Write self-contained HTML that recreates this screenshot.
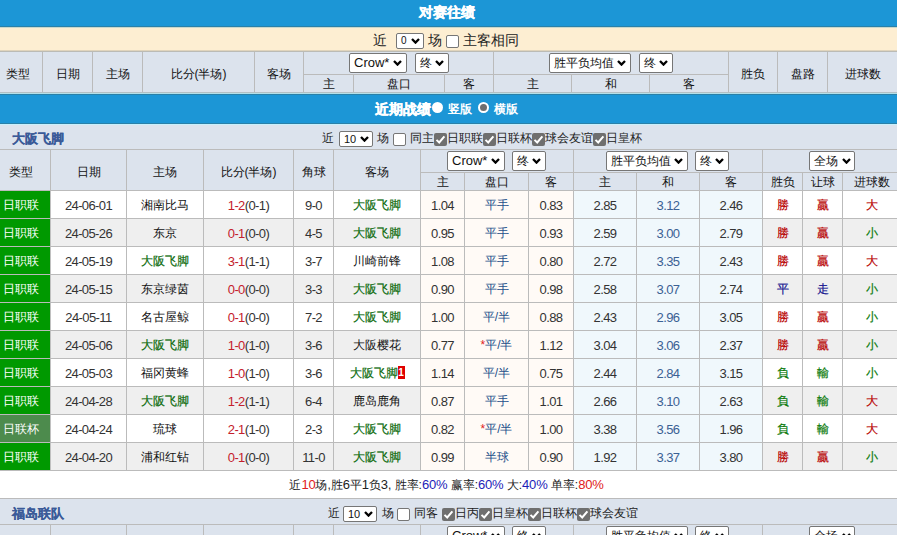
<!DOCTYPE html>
<html><head><meta charset="utf-8"><style>
html,body{margin:0;padding:0;}
body{width:897px;height:535px;overflow:hidden;position:relative;background:#fff;font-family:"Liberation Sans",sans-serif;font-size:12px;color:#222;}
body>div{position:absolute;white-space:nowrap;}
.h{font-size:12px;color:#111;}
.t{font-size:12px;}
.k{font-size:12px;-webkit-text-stroke:0.2px currentColor;}
.k .rc{-webkit-text-stroke:0;}
.n{font-size:13px;letter-spacing:-0.6px;}
.s{font-size:12px;}
.s i{font-style:normal;font-size:13px;letter-spacing:-0.2px;}
.b{color:#1c1cb8;}
.r{color:#e02020;}
.sel{background:#fff;border:1px solid #767676;border-radius:2px;color:#111;}
.cbu{background:#fff;border:1px solid #767676;border-radius:2px;}
.cbc{background:#6f6f6f;border-radius:2px;}
.rc{display:inline-block;width:7px;height:13px;background:#e00000;color:#fff;font-weight:bold;font-size:10px;letter-spacing:0;line-height:13px;text-align:center;vertical-align:middle;margin-top:-3px;}
</style></head><body>
<div style="left:0px;top:0px;width:897px;height:26px;background:#1c96d6;"></div>
<div style="left:0px;top:26px;width:897px;height:1px;background:#2a80a8;"></div>
<div style="left:346.5px;top:-1px;width:200px;height:26px;line-height:26px;text-align:center;color:#fff;font-weight:bold;font-size:14px;-webkit-text-stroke:0.4px #fff;">对赛往绩</div>
<div style="left:0px;top:27px;width:897px;height:24px;background:#fdeed2;"></div>
<div style="left:0px;top:27px;width:897px;height:1px;background:#c8d8cc;"></div>
<div style="left:373px;top:28px;height:24px;line-height:24px;font-size:14px;color:#222;">近</div>
<div class="sel" style="left:396px;top:33px;width:26px;height:14px;"><span style="position:absolute;left:4px;top:0px;line-height:14px;font-size:10px">0</span><svg width="9" height="6" viewBox="0 0 9 6" style="position:absolute;right:3px;top:4px"><path d="M1 1 L4.5 4.6 L8 1" fill="none" stroke="#000" stroke-width="2.3"/></svg></div>
<div style="left:428px;top:28px;height:24px;line-height:24px;font-size:14px;color:#222;">场</div>
<div class="cbu" style="left:446px;top:35px;width:11px;height:11px;"></div>
<div style="left:463px;top:28px;height:24px;line-height:24px;font-size:14px;color:#222;">主客相同</div>
<div style="left:0px;top:50px;width:897px;height:1px;background:#e0d4bc;"></div>
<div style="left:0px;top:51px;width:897px;height:1px;background:#bbbbb5;"></div>
<div style="left:0px;top:52px;width:897px;height:40px;background:#dce3ed;"></div>
<div style="left:0px;top:92px;width:897px;height:1px;background:#b4c0c4;"></div>
<div style="left:0px;top:93px;width:897px;height:1px;background:#b3e0ea;"></div>
<div style="left:42px;top:52px;width:1px;height:40px;background:#bbbbbb;"></div>
<div style="left:92px;top:52px;width:1px;height:40px;background:#bbbbbb;"></div>
<div style="left:142px;top:52px;width:1px;height:40px;background:#bbbbbb;"></div>
<div style="left:254px;top:52px;width:1px;height:40px;background:#bbbbbb;"></div>
<div style="left:303px;top:52px;width:1px;height:40px;background:#bbbbbb;"></div>
<div style="left:493px;top:52px;width:1px;height:40px;background:#bbbbbb;"></div>
<div style="left:728px;top:52px;width:1px;height:40px;background:#bbbbbb;"></div>
<div style="left:777px;top:52px;width:1px;height:40px;background:#bbbbbb;"></div>
<div style="left:827px;top:52px;width:1px;height:40px;background:#bbbbbb;"></div>
<div style="left:303px;top:74px;width:425px;height:1px;background:#bbbbbb;"></div>
<div style="left:353px;top:75px;width:1px;height:17px;background:#bbbbbb;"></div>
<div style="left:444px;top:75px;width:1px;height:17px;background:#bbbbbb;"></div>
<div style="left:571px;top:75px;width:1px;height:17px;background:#bbbbbb;"></div>
<div style="left:649px;top:75px;width:1px;height:17px;background:#bbbbbb;"></div>
<div class="h" style="left:-7px;top:54px;width:49px;height:40px;line-height:40px;text-align:center;">类型</div>
<div class="h" style="left:43px;top:54px;width:49px;height:40px;line-height:40px;text-align:center;">日期</div>
<div class="h" style="left:93px;top:54px;width:49px;height:40px;line-height:40px;text-align:center;">主场</div>
<div class="h" style="left:143px;top:54px;width:111px;height:40px;line-height:40px;text-align:center;">比分(半场)</div>
<div class="h" style="left:255px;top:54px;width:48px;height:40px;line-height:40px;text-align:center;">客场</div>
<div class="h" style="left:729px;top:54px;width:48px;height:40px;line-height:40px;text-align:center;">胜负</div>
<div class="h" style="left:778px;top:54px;width:49px;height:40px;line-height:40px;text-align:center;">盘路</div>
<div class="h" style="left:828px;top:54px;width:69px;height:40px;line-height:40px;text-align:center;">进球数</div>
<div class="h" style="left:304px;top:76px;width:49px;height:17px;line-height:17px;text-align:center;">主</div>
<div class="h" style="left:354px;top:76px;width:90px;height:17px;line-height:17px;text-align:center;">盘口</div>
<div class="h" style="left:445px;top:76px;width:48px;height:17px;line-height:17px;text-align:center;">客</div>
<div class="h" style="left:494px;top:76px;width:77px;height:17px;line-height:17px;text-align:center;">主</div>
<div class="h" style="left:572px;top:76px;width:77px;height:17px;line-height:17px;text-align:center;">和</div>
<div class="h" style="left:650px;top:76px;width:78px;height:17px;line-height:17px;text-align:center;">客</div>
<div class="sel" style="left:349px;top:53px;width:56px;height:18px;"><span style="position:absolute;left:4px;top:0px;line-height:18px;font-size:13px">Crow*</span><svg width="9" height="6" viewBox="0 0 9 6" style="position:absolute;right:4px;top:6px"><path d="M1 1 L4.5 4.6 L8 1" fill="none" stroke="#000" stroke-width="2.3"/></svg></div>
<div class="sel" style="left:415px;top:53px;width:32px;height:18px;"><span style="position:absolute;left:4px;top:0px;line-height:18px;font-size:12px">终</span><svg width="9" height="6" viewBox="0 0 9 6" style="position:absolute;right:4px;top:6px"><path d="M1 1 L4.5 4.6 L8 1" fill="none" stroke="#000" stroke-width="2.3"/></svg></div>
<div class="sel" style="left:549px;top:53px;width:80px;height:18px;"><span style="position:absolute;left:4px;top:0px;line-height:18px;font-size:12px">胜平负均值</span><svg width="9" height="6" viewBox="0 0 9 6" style="position:absolute;right:4px;top:6px"><path d="M1 1 L4.5 4.6 L8 1" fill="none" stroke="#000" stroke-width="2.3"/></svg></div>
<div class="sel" style="left:639px;top:53px;width:32px;height:18px;"><span style="position:absolute;left:4px;top:0px;line-height:18px;font-size:12px">终</span><svg width="9" height="6" viewBox="0 0 9 6" style="position:absolute;right:4px;top:6px"><path d="M1 1 L4.5 4.6 L8 1" fill="none" stroke="#000" stroke-width="2.3"/></svg></div>
<div style="left:0px;top:94px;width:897px;height:1px;background:#2a80a8;"></div>
<div style="left:0px;top:95px;width:897px;height:28px;background:#1c96d6;"></div>
<div style="left:0px;top:123px;width:897px;height:1px;background:#2a80a8;"></div>
<div style="left:375px;top:95px;height:28px;line-height:28px;font-size:14px;font-weight:bold;color:#fff;-webkit-text-stroke:0.4px #fff;">近期战绩</div>
<div style="left:432px;top:102px;width:11px;height:11px;border-radius:50%;background:#fff;"></div>
<div style="left:448px;top:95px;height:28px;line-height:28px;font-size:12px;font-weight:bold;color:#fff;">竖版</div>
<div style="left:478px;top:102px;width:7px;height:7px;border-radius:50%;background:#6e6e6e;border:2px solid #fff;"></div>
<div style="left:494px;top:95px;height:28px;line-height:28px;font-size:12px;font-weight:bold;color:#fff;">横版</div>
<div style="left:0px;top:124px;width:897px;height:25px;background:#dce3ed;"></div>
<div style="left:0px;top:124px;width:897px;height:1px;background:#c8f0fc;"></div>
<div style="left:12px;top:126px;height:25px;line-height:25px;font-size:13px;font-weight:bold;color:#3a5a98;-webkit-text-stroke:0.15px #3a5a98;">大阪飞脚</div>
<div style="left:322px;top:126px;height:25px;line-height:25px;font-size:12px;color:#222;">近</div>
<div class="sel" style="left:339px;top:131px;width:32px;height:14px;"><span style="position:absolute;left:4px;top:0px;line-height:14px;font-size:11px">10</span><svg width="9" height="6" viewBox="0 0 9 6" style="position:absolute;right:3px;top:4px"><path d="M1 1 L4.5 4.6 L8 1" fill="none" stroke="#000" stroke-width="2.3"/></svg></div>
<div style="left:377px;top:126px;height:25px;line-height:25px;font-size:12px;color:#222;">场</div>
<div class="cbu" style="left:393px;top:133px;width:11px;height:11px;"></div>
<div style="left:410px;top:126px;height:25px;line-height:25px;font-size:12px;color:#222;">同主</div>
<div class="cbc" style="left:434px;top:133px;width:13px;height:13px;"><svg width="13" height="13" viewBox="0 0 13 13" style="position:absolute;left:0;top:0"><path d="M2.5 6.9 L5.2 9.5 L10.4 3.3" fill="none" stroke="#fff" stroke-width="2"/></svg></div>
<div style="left:447px;top:126px;height:25px;line-height:25px;font-size:12px;color:#222;">日职联</div>
<div class="cbc" style="left:483px;top:133px;width:13px;height:13px;"><svg width="13" height="13" viewBox="0 0 13 13" style="position:absolute;left:0;top:0"><path d="M2.5 6.9 L5.2 9.5 L10.4 3.3" fill="none" stroke="#fff" stroke-width="2"/></svg></div>
<div style="left:496px;top:126px;height:25px;line-height:25px;font-size:12px;color:#222;">日联杯</div>
<div class="cbc" style="left:532px;top:133px;width:13px;height:13px;"><svg width="13" height="13" viewBox="0 0 13 13" style="position:absolute;left:0;top:0"><path d="M2.5 6.9 L5.2 9.5 L10.4 3.3" fill="none" stroke="#fff" stroke-width="2"/></svg></div>
<div style="left:545px;top:126px;height:25px;line-height:25px;font-size:12px;color:#222;">球会友谊</div>
<div class="cbc" style="left:593px;top:133px;width:13px;height:13px;"><svg width="13" height="13" viewBox="0 0 13 13" style="position:absolute;left:0;top:0"><path d="M2.5 6.9 L5.2 9.5 L10.4 3.3" fill="none" stroke="#fff" stroke-width="2"/></svg></div>
<div style="left:606px;top:126px;height:25px;line-height:25px;font-size:12px;color:#222;">日皇杯</div>
<div style="left:0px;top:149px;width:897px;height:1px;background:#bbbbbb;"></div>
<div style="left:0px;top:150px;width:897px;height:40px;background:#dce3ed;"></div>
<div style="left:0px;top:190px;width:897px;height:1px;background:#bbbbbb;"></div>
<div style="left:50px;top:150px;width:1px;height:40px;background:#bbbbbb;"></div>
<div style="left:126px;top:150px;width:1px;height:40px;background:#bbbbbb;"></div>
<div style="left:203px;top:150px;width:1px;height:40px;background:#bbbbbb;"></div>
<div style="left:293px;top:150px;width:1px;height:40px;background:#bbbbbb;"></div>
<div style="left:333px;top:150px;width:1px;height:40px;background:#bbbbbb;"></div>
<div style="left:420px;top:150px;width:1px;height:40px;background:#bbbbbb;"></div>
<div style="left:573px;top:150px;width:1px;height:40px;background:#bbbbbb;"></div>
<div style="left:762px;top:150px;width:1px;height:40px;background:#bbbbbb;"></div>
<div style="left:420px;top:172px;width:477px;height:1px;background:#bbbbbb;"></div>
<div style="left:464px;top:173px;width:1px;height:17px;background:#bbbbbb;"></div>
<div style="left:528px;top:173px;width:1px;height:17px;background:#bbbbbb;"></div>
<div style="left:636px;top:173px;width:1px;height:17px;background:#bbbbbb;"></div>
<div style="left:699px;top:173px;width:1px;height:17px;background:#bbbbbb;"></div>
<div style="left:802px;top:173px;width:1px;height:17px;background:#bbbbbb;"></div>
<div style="left:842px;top:173px;width:1px;height:17px;background:#bbbbbb;"></div>
<div class="h" style="left:1px;top:152px;width:40px;height:40px;line-height:40px;text-align:center;">类型</div>
<div class="h" style="left:51px;top:152px;width:75px;height:40px;line-height:40px;text-align:center;">日期</div>
<div class="h" style="left:127px;top:152px;width:76px;height:40px;line-height:40px;text-align:center;">主场</div>
<div class="h" style="left:204px;top:152px;width:89px;height:40px;line-height:40px;text-align:center;">比分(半场)</div>
<div class="h" style="left:294px;top:152px;width:39px;height:40px;line-height:40px;text-align:center;">角球</div>
<div class="h" style="left:334px;top:152px;width:86px;height:40px;line-height:40px;text-align:center;">客场</div>
<div class="h" style="left:421px;top:174px;width:43px;height:17px;line-height:17px;text-align:center;">主</div>
<div class="h" style="left:465px;top:174px;width:63px;height:17px;line-height:17px;text-align:center;">盘口</div>
<div class="h" style="left:529px;top:174px;width:44px;height:17px;line-height:17px;text-align:center;">客</div>
<div class="h" style="left:574px;top:174px;width:62px;height:17px;line-height:17px;text-align:center;">主</div>
<div class="h" style="left:637px;top:174px;width:62px;height:17px;line-height:17px;text-align:center;">和</div>
<div class="h" style="left:700px;top:174px;width:62px;height:17px;line-height:17px;text-align:center;">客</div>
<div class="h" style="left:763px;top:174px;width:39px;height:17px;line-height:17px;text-align:center;">胜负</div>
<div class="h" style="left:803px;top:174px;width:39px;height:17px;line-height:17px;text-align:center;">让球</div>
<div class="h" style="left:843px;top:174px;width:57px;height:17px;line-height:17px;text-align:center;">进球数</div>
<div class="sel" style="left:447px;top:151px;width:56px;height:18px;"><span style="position:absolute;left:4px;top:0px;line-height:18px;font-size:13px">Crow*</span><svg width="9" height="6" viewBox="0 0 9 6" style="position:absolute;right:4px;top:6px"><path d="M1 1 L4.5 4.6 L8 1" fill="none" stroke="#000" stroke-width="2.3"/></svg></div>
<div class="sel" style="left:512px;top:151px;width:32px;height:18px;"><span style="position:absolute;left:4px;top:0px;line-height:18px;font-size:12px">终</span><svg width="9" height="6" viewBox="0 0 9 6" style="position:absolute;right:4px;top:6px"><path d="M1 1 L4.5 4.6 L8 1" fill="none" stroke="#000" stroke-width="2.3"/></svg></div>
<div class="sel" style="left:606px;top:151px;width:80px;height:18px;"><span style="position:absolute;left:4px;top:0px;line-height:18px;font-size:12px">胜平负均值</span><svg width="9" height="6" viewBox="0 0 9 6" style="position:absolute;right:4px;top:6px"><path d="M1 1 L4.5 4.6 L8 1" fill="none" stroke="#000" stroke-width="2.3"/></svg></div>
<div class="sel" style="left:695px;top:151px;width:32px;height:18px;"><span style="position:absolute;left:4px;top:0px;line-height:18px;font-size:12px">终</span><svg width="9" height="6" viewBox="0 0 9 6" style="position:absolute;right:4px;top:6px"><path d="M1 1 L4.5 4.6 L8 1" fill="none" stroke="#000" stroke-width="2.3"/></svg></div>
<div class="sel" style="left:809px;top:151px;width:44px;height:18px;"><span style="position:absolute;left:4px;top:0px;line-height:18px;font-size:12px">全场</span><svg width="9" height="6" viewBox="0 0 9 6" style="position:absolute;right:3px;top:6px"><path d="M1 1 L4.5 4.6 L8 1" fill="none" stroke="#000" stroke-width="2.3"/></svg></div>
<div style="left:50px;top:191px;width:847px;height:27px;background:#ffffff;"></div>
<div style="left:421px;top:191px;width:152px;height:27px;background:#fffaf6;"></div>
<div style="left:574px;top:191px;width:188px;height:27px;background:#f0f8fc;"></div>
<div style="left:0px;top:191px;width:50px;height:27px;background:#009900;"></div>
<div style="left:0px;top:218px;width:897px;height:1px;background:#bbbbbb;"></div>
<div style="left:126px;top:191px;width:1px;height:27px;background:#bbbbbb;"></div>
<div style="left:203px;top:191px;width:1px;height:27px;background:#bbbbbb;"></div>
<div style="left:293px;top:191px;width:1px;height:27px;background:#bbbbbb;"></div>
<div style="left:333px;top:191px;width:1px;height:27px;background:#bbbbbb;"></div>
<div style="left:420px;top:191px;width:1px;height:27px;background:#bbbbbb;"></div>
<div style="left:464px;top:191px;width:1px;height:27px;background:#bbbbbb;"></div>
<div style="left:528px;top:191px;width:1px;height:27px;background:#bbbbbb;"></div>
<div style="left:573px;top:191px;width:1px;height:27px;background:#bbbbbb;"></div>
<div style="left:636px;top:191px;width:1px;height:27px;background:#bbbbbb;"></div>
<div style="left:699px;top:191px;width:1px;height:27px;background:#bbbbbb;"></div>
<div style="left:762px;top:191px;width:1px;height:27px;background:#bbbbbb;"></div>
<div style="left:802px;top:191px;width:1px;height:27px;background:#bbbbbb;"></div>
<div style="left:842px;top:191px;width:1px;height:27px;background:#bbbbbb;"></div>
<div style="left:50px;top:191px;width:1px;height:27px;background:#c0c0c0;"></div>
<div class="t" style="left:0px;top:192px;width:41px;height:27px;line-height:27px;text-align:center;color:#fff;">日职联</div>
<div class="n" style="left:51px;top:192px;width:75px;height:27px;line-height:27px;text-align:center;color:#333;">24-06-01</div>
<div class="t" style="left:127px;top:192px;width:76px;height:27px;line-height:27px;text-align:center;color:#111;">湘南比马</div>
<div class="n" style="left:204px;top:192px;width:89px;height:27px;line-height:27px;text-align:center;color:#333;"><span style="color:#c4202c">1-2</span>(0-1)</div>
<div class="n" style="left:294px;top:192px;width:39px;height:27px;line-height:27px;text-align:center;color:#333;">9-0</div>
<div class="k" style="left:334px;top:192px;width:86px;height:27px;line-height:27px;text-align:center;color:#0a6a0a;">大阪飞脚</div>
<div class="n" style="left:421px;top:192px;width:43px;height:27px;line-height:27px;text-align:center;color:#333;">1.04</div>
<div class="t" style="left:465px;top:192px;width:63px;height:27px;line-height:27px;text-align:center;color:#24508a;">平手</div>
<div class="n" style="left:529px;top:192px;width:44px;height:27px;line-height:27px;text-align:center;color:#333;">0.83</div>
<div class="n" style="left:574px;top:192px;width:62px;height:27px;line-height:27px;text-align:center;color:#333;">2.85</div>
<div class="n" style="left:637px;top:192px;width:62px;height:27px;line-height:27px;text-align:center;color:#3b6194;">3.12</div>
<div class="n" style="left:700px;top:192px;width:62px;height:27px;line-height:27px;text-align:center;color:#333;">2.46</div>
<div class="k" style="left:763px;top:192px;width:39px;height:27px;line-height:27px;text-align:center;color:#b80000;">勝</div>
<div class="k" style="left:803px;top:192px;width:39px;height:27px;line-height:27px;text-align:center;color:#b80000;">贏</div>
<div class="k" style="left:843px;top:192px;width:57px;height:27px;line-height:27px;text-align:center;color:#b80000;">大</div>
<div style="left:50px;top:219px;width:847px;height:27px;background:#efefef;"></div>
<div style="left:421px;top:219px;width:152px;height:27px;background:#fffaf6;"></div>
<div style="left:574px;top:219px;width:188px;height:27px;background:#f0f8fc;"></div>
<div style="left:0px;top:219px;width:50px;height:27px;background:#009900;"></div>
<div style="left:0px;top:246px;width:897px;height:1px;background:#bbbbbb;"></div>
<div style="left:126px;top:219px;width:1px;height:27px;background:#bbbbbb;"></div>
<div style="left:203px;top:219px;width:1px;height:27px;background:#bbbbbb;"></div>
<div style="left:293px;top:219px;width:1px;height:27px;background:#bbbbbb;"></div>
<div style="left:333px;top:219px;width:1px;height:27px;background:#bbbbbb;"></div>
<div style="left:420px;top:219px;width:1px;height:27px;background:#bbbbbb;"></div>
<div style="left:464px;top:219px;width:1px;height:27px;background:#bbbbbb;"></div>
<div style="left:528px;top:219px;width:1px;height:27px;background:#bbbbbb;"></div>
<div style="left:573px;top:219px;width:1px;height:27px;background:#bbbbbb;"></div>
<div style="left:636px;top:219px;width:1px;height:27px;background:#bbbbbb;"></div>
<div style="left:699px;top:219px;width:1px;height:27px;background:#bbbbbb;"></div>
<div style="left:762px;top:219px;width:1px;height:27px;background:#bbbbbb;"></div>
<div style="left:802px;top:219px;width:1px;height:27px;background:#bbbbbb;"></div>
<div style="left:842px;top:219px;width:1px;height:27px;background:#bbbbbb;"></div>
<div style="left:50px;top:219px;width:1px;height:27px;background:#c0c0c0;"></div>
<div class="t" style="left:0px;top:220px;width:41px;height:27px;line-height:27px;text-align:center;color:#fff;">日职联</div>
<div class="n" style="left:51px;top:220px;width:75px;height:27px;line-height:27px;text-align:center;color:#333;">24-05-26</div>
<div class="t" style="left:127px;top:220px;width:76px;height:27px;line-height:27px;text-align:center;color:#111;">东京</div>
<div class="n" style="left:204px;top:220px;width:89px;height:27px;line-height:27px;text-align:center;color:#333;"><span style="color:#c4202c">0-1</span>(0-0)</div>
<div class="n" style="left:294px;top:220px;width:39px;height:27px;line-height:27px;text-align:center;color:#333;">4-5</div>
<div class="k" style="left:334px;top:220px;width:86px;height:27px;line-height:27px;text-align:center;color:#0a6a0a;">大阪飞脚</div>
<div class="n" style="left:421px;top:220px;width:43px;height:27px;line-height:27px;text-align:center;color:#333;">0.95</div>
<div class="t" style="left:465px;top:220px;width:63px;height:27px;line-height:27px;text-align:center;color:#24508a;">平手</div>
<div class="n" style="left:529px;top:220px;width:44px;height:27px;line-height:27px;text-align:center;color:#333;">0.93</div>
<div class="n" style="left:574px;top:220px;width:62px;height:27px;line-height:27px;text-align:center;color:#333;">2.59</div>
<div class="n" style="left:637px;top:220px;width:62px;height:27px;line-height:27px;text-align:center;color:#3b6194;">3.00</div>
<div class="n" style="left:700px;top:220px;width:62px;height:27px;line-height:27px;text-align:center;color:#333;">2.79</div>
<div class="k" style="left:763px;top:220px;width:39px;height:27px;line-height:27px;text-align:center;color:#b80000;">勝</div>
<div class="k" style="left:803px;top:220px;width:39px;height:27px;line-height:27px;text-align:center;color:#b80000;">贏</div>
<div class="k" style="left:843px;top:220px;width:57px;height:27px;line-height:27px;text-align:center;color:#0a7a0a;">小</div>
<div style="left:50px;top:247px;width:847px;height:27px;background:#ffffff;"></div>
<div style="left:421px;top:247px;width:152px;height:27px;background:#fffaf6;"></div>
<div style="left:574px;top:247px;width:188px;height:27px;background:#f0f8fc;"></div>
<div style="left:0px;top:247px;width:50px;height:27px;background:#009900;"></div>
<div style="left:0px;top:274px;width:897px;height:1px;background:#bbbbbb;"></div>
<div style="left:126px;top:247px;width:1px;height:27px;background:#bbbbbb;"></div>
<div style="left:203px;top:247px;width:1px;height:27px;background:#bbbbbb;"></div>
<div style="left:293px;top:247px;width:1px;height:27px;background:#bbbbbb;"></div>
<div style="left:333px;top:247px;width:1px;height:27px;background:#bbbbbb;"></div>
<div style="left:420px;top:247px;width:1px;height:27px;background:#bbbbbb;"></div>
<div style="left:464px;top:247px;width:1px;height:27px;background:#bbbbbb;"></div>
<div style="left:528px;top:247px;width:1px;height:27px;background:#bbbbbb;"></div>
<div style="left:573px;top:247px;width:1px;height:27px;background:#bbbbbb;"></div>
<div style="left:636px;top:247px;width:1px;height:27px;background:#bbbbbb;"></div>
<div style="left:699px;top:247px;width:1px;height:27px;background:#bbbbbb;"></div>
<div style="left:762px;top:247px;width:1px;height:27px;background:#bbbbbb;"></div>
<div style="left:802px;top:247px;width:1px;height:27px;background:#bbbbbb;"></div>
<div style="left:842px;top:247px;width:1px;height:27px;background:#bbbbbb;"></div>
<div style="left:50px;top:247px;width:1px;height:27px;background:#c0c0c0;"></div>
<div class="t" style="left:0px;top:248px;width:41px;height:27px;line-height:27px;text-align:center;color:#fff;">日职联</div>
<div class="n" style="left:51px;top:248px;width:75px;height:27px;line-height:27px;text-align:center;color:#333;">24-05-19</div>
<div class="k" style="left:127px;top:248px;width:76px;height:27px;line-height:27px;text-align:center;color:#0a6a0a;">大阪飞脚</div>
<div class="n" style="left:204px;top:248px;width:89px;height:27px;line-height:27px;text-align:center;color:#333;"><span style="color:#c4202c">3-1</span>(1-1)</div>
<div class="n" style="left:294px;top:248px;width:39px;height:27px;line-height:27px;text-align:center;color:#333;">3-7</div>
<div class="t" style="left:334px;top:248px;width:86px;height:27px;line-height:27px;text-align:center;color:#111;">川崎前锋</div>
<div class="n" style="left:421px;top:248px;width:43px;height:27px;line-height:27px;text-align:center;color:#333;">1.08</div>
<div class="t" style="left:465px;top:248px;width:63px;height:27px;line-height:27px;text-align:center;color:#24508a;">平手</div>
<div class="n" style="left:529px;top:248px;width:44px;height:27px;line-height:27px;text-align:center;color:#333;">0.80</div>
<div class="n" style="left:574px;top:248px;width:62px;height:27px;line-height:27px;text-align:center;color:#333;">2.72</div>
<div class="n" style="left:637px;top:248px;width:62px;height:27px;line-height:27px;text-align:center;color:#3b6194;">3.35</div>
<div class="n" style="left:700px;top:248px;width:62px;height:27px;line-height:27px;text-align:center;color:#333;">2.43</div>
<div class="k" style="left:763px;top:248px;width:39px;height:27px;line-height:27px;text-align:center;color:#b80000;">勝</div>
<div class="k" style="left:803px;top:248px;width:39px;height:27px;line-height:27px;text-align:center;color:#b80000;">贏</div>
<div class="k" style="left:843px;top:248px;width:57px;height:27px;line-height:27px;text-align:center;color:#b80000;">大</div>
<div style="left:50px;top:275px;width:847px;height:27px;background:#efefef;"></div>
<div style="left:421px;top:275px;width:152px;height:27px;background:#fffaf6;"></div>
<div style="left:574px;top:275px;width:188px;height:27px;background:#f0f8fc;"></div>
<div style="left:0px;top:275px;width:50px;height:27px;background:#009900;"></div>
<div style="left:0px;top:302px;width:897px;height:1px;background:#bbbbbb;"></div>
<div style="left:126px;top:275px;width:1px;height:27px;background:#bbbbbb;"></div>
<div style="left:203px;top:275px;width:1px;height:27px;background:#bbbbbb;"></div>
<div style="left:293px;top:275px;width:1px;height:27px;background:#bbbbbb;"></div>
<div style="left:333px;top:275px;width:1px;height:27px;background:#bbbbbb;"></div>
<div style="left:420px;top:275px;width:1px;height:27px;background:#bbbbbb;"></div>
<div style="left:464px;top:275px;width:1px;height:27px;background:#bbbbbb;"></div>
<div style="left:528px;top:275px;width:1px;height:27px;background:#bbbbbb;"></div>
<div style="left:573px;top:275px;width:1px;height:27px;background:#bbbbbb;"></div>
<div style="left:636px;top:275px;width:1px;height:27px;background:#bbbbbb;"></div>
<div style="left:699px;top:275px;width:1px;height:27px;background:#bbbbbb;"></div>
<div style="left:762px;top:275px;width:1px;height:27px;background:#bbbbbb;"></div>
<div style="left:802px;top:275px;width:1px;height:27px;background:#bbbbbb;"></div>
<div style="left:842px;top:275px;width:1px;height:27px;background:#bbbbbb;"></div>
<div style="left:50px;top:275px;width:1px;height:27px;background:#c0c0c0;"></div>
<div class="t" style="left:0px;top:276px;width:41px;height:27px;line-height:27px;text-align:center;color:#fff;">日职联</div>
<div class="n" style="left:51px;top:276px;width:75px;height:27px;line-height:27px;text-align:center;color:#333;">24-05-15</div>
<div class="t" style="left:127px;top:276px;width:76px;height:27px;line-height:27px;text-align:center;color:#111;">东京绿茵</div>
<div class="n" style="left:204px;top:276px;width:89px;height:27px;line-height:27px;text-align:center;color:#333;"><span style="color:#c4202c">0-0</span>(0-0)</div>
<div class="n" style="left:294px;top:276px;width:39px;height:27px;line-height:27px;text-align:center;color:#333;">3-3</div>
<div class="k" style="left:334px;top:276px;width:86px;height:27px;line-height:27px;text-align:center;color:#0a6a0a;">大阪飞脚</div>
<div class="n" style="left:421px;top:276px;width:43px;height:27px;line-height:27px;text-align:center;color:#333;">0.90</div>
<div class="t" style="left:465px;top:276px;width:63px;height:27px;line-height:27px;text-align:center;color:#24508a;">平手</div>
<div class="n" style="left:529px;top:276px;width:44px;height:27px;line-height:27px;text-align:center;color:#333;">0.98</div>
<div class="n" style="left:574px;top:276px;width:62px;height:27px;line-height:27px;text-align:center;color:#333;">2.58</div>
<div class="n" style="left:637px;top:276px;width:62px;height:27px;line-height:27px;text-align:center;color:#3b6194;">3.07</div>
<div class="n" style="left:700px;top:276px;width:62px;height:27px;line-height:27px;text-align:center;color:#333;">2.74</div>
<div class="k" style="left:763px;top:276px;width:39px;height:27px;line-height:27px;text-align:center;color:#141490;">平</div>
<div class="k" style="left:803px;top:276px;width:39px;height:27px;line-height:27px;text-align:center;color:#141490;">走</div>
<div class="k" style="left:843px;top:276px;width:57px;height:27px;line-height:27px;text-align:center;color:#0a7a0a;">小</div>
<div style="left:50px;top:303px;width:847px;height:27px;background:#ffffff;"></div>
<div style="left:421px;top:303px;width:152px;height:27px;background:#fffaf6;"></div>
<div style="left:574px;top:303px;width:188px;height:27px;background:#f0f8fc;"></div>
<div style="left:0px;top:303px;width:50px;height:27px;background:#009900;"></div>
<div style="left:0px;top:330px;width:897px;height:1px;background:#bbbbbb;"></div>
<div style="left:126px;top:303px;width:1px;height:27px;background:#bbbbbb;"></div>
<div style="left:203px;top:303px;width:1px;height:27px;background:#bbbbbb;"></div>
<div style="left:293px;top:303px;width:1px;height:27px;background:#bbbbbb;"></div>
<div style="left:333px;top:303px;width:1px;height:27px;background:#bbbbbb;"></div>
<div style="left:420px;top:303px;width:1px;height:27px;background:#bbbbbb;"></div>
<div style="left:464px;top:303px;width:1px;height:27px;background:#bbbbbb;"></div>
<div style="left:528px;top:303px;width:1px;height:27px;background:#bbbbbb;"></div>
<div style="left:573px;top:303px;width:1px;height:27px;background:#bbbbbb;"></div>
<div style="left:636px;top:303px;width:1px;height:27px;background:#bbbbbb;"></div>
<div style="left:699px;top:303px;width:1px;height:27px;background:#bbbbbb;"></div>
<div style="left:762px;top:303px;width:1px;height:27px;background:#bbbbbb;"></div>
<div style="left:802px;top:303px;width:1px;height:27px;background:#bbbbbb;"></div>
<div style="left:842px;top:303px;width:1px;height:27px;background:#bbbbbb;"></div>
<div style="left:50px;top:303px;width:1px;height:27px;background:#c0c0c0;"></div>
<div class="t" style="left:0px;top:304px;width:41px;height:27px;line-height:27px;text-align:center;color:#fff;">日职联</div>
<div class="n" style="left:51px;top:304px;width:75px;height:27px;line-height:27px;text-align:center;color:#333;">24-05-11</div>
<div class="t" style="left:127px;top:304px;width:76px;height:27px;line-height:27px;text-align:center;color:#111;">名古屋鲸</div>
<div class="n" style="left:204px;top:304px;width:89px;height:27px;line-height:27px;text-align:center;color:#333;"><span style="color:#c4202c">0-1</span>(0-0)</div>
<div class="n" style="left:294px;top:304px;width:39px;height:27px;line-height:27px;text-align:center;color:#333;">7-2</div>
<div class="k" style="left:334px;top:304px;width:86px;height:27px;line-height:27px;text-align:center;color:#0a6a0a;">大阪飞脚</div>
<div class="n" style="left:421px;top:304px;width:43px;height:27px;line-height:27px;text-align:center;color:#333;">1.00</div>
<div class="t" style="left:465px;top:304px;width:63px;height:27px;line-height:27px;text-align:center;color:#24508a;">平/半</div>
<div class="n" style="left:529px;top:304px;width:44px;height:27px;line-height:27px;text-align:center;color:#333;">0.88</div>
<div class="n" style="left:574px;top:304px;width:62px;height:27px;line-height:27px;text-align:center;color:#333;">2.43</div>
<div class="n" style="left:637px;top:304px;width:62px;height:27px;line-height:27px;text-align:center;color:#3b6194;">2.96</div>
<div class="n" style="left:700px;top:304px;width:62px;height:27px;line-height:27px;text-align:center;color:#333;">3.05</div>
<div class="k" style="left:763px;top:304px;width:39px;height:27px;line-height:27px;text-align:center;color:#b80000;">勝</div>
<div class="k" style="left:803px;top:304px;width:39px;height:27px;line-height:27px;text-align:center;color:#b80000;">贏</div>
<div class="k" style="left:843px;top:304px;width:57px;height:27px;line-height:27px;text-align:center;color:#0a7a0a;">小</div>
<div style="left:50px;top:331px;width:847px;height:27px;background:#efefef;"></div>
<div style="left:421px;top:331px;width:152px;height:27px;background:#fffaf6;"></div>
<div style="left:574px;top:331px;width:188px;height:27px;background:#f0f8fc;"></div>
<div style="left:0px;top:331px;width:50px;height:27px;background:#009900;"></div>
<div style="left:0px;top:358px;width:897px;height:1px;background:#bbbbbb;"></div>
<div style="left:126px;top:331px;width:1px;height:27px;background:#bbbbbb;"></div>
<div style="left:203px;top:331px;width:1px;height:27px;background:#bbbbbb;"></div>
<div style="left:293px;top:331px;width:1px;height:27px;background:#bbbbbb;"></div>
<div style="left:333px;top:331px;width:1px;height:27px;background:#bbbbbb;"></div>
<div style="left:420px;top:331px;width:1px;height:27px;background:#bbbbbb;"></div>
<div style="left:464px;top:331px;width:1px;height:27px;background:#bbbbbb;"></div>
<div style="left:528px;top:331px;width:1px;height:27px;background:#bbbbbb;"></div>
<div style="left:573px;top:331px;width:1px;height:27px;background:#bbbbbb;"></div>
<div style="left:636px;top:331px;width:1px;height:27px;background:#bbbbbb;"></div>
<div style="left:699px;top:331px;width:1px;height:27px;background:#bbbbbb;"></div>
<div style="left:762px;top:331px;width:1px;height:27px;background:#bbbbbb;"></div>
<div style="left:802px;top:331px;width:1px;height:27px;background:#bbbbbb;"></div>
<div style="left:842px;top:331px;width:1px;height:27px;background:#bbbbbb;"></div>
<div style="left:50px;top:331px;width:1px;height:27px;background:#c0c0c0;"></div>
<div class="t" style="left:0px;top:332px;width:41px;height:27px;line-height:27px;text-align:center;color:#fff;">日职联</div>
<div class="n" style="left:51px;top:332px;width:75px;height:27px;line-height:27px;text-align:center;color:#333;">24-05-06</div>
<div class="k" style="left:127px;top:332px;width:76px;height:27px;line-height:27px;text-align:center;color:#0a6a0a;">大阪飞脚</div>
<div class="n" style="left:204px;top:332px;width:89px;height:27px;line-height:27px;text-align:center;color:#333;"><span style="color:#c4202c">1-0</span>(1-0)</div>
<div class="n" style="left:294px;top:332px;width:39px;height:27px;line-height:27px;text-align:center;color:#333;">3-6</div>
<div class="t" style="left:334px;top:332px;width:86px;height:27px;line-height:27px;text-align:center;color:#111;">大阪樱花</div>
<div class="n" style="left:421px;top:332px;width:43px;height:27px;line-height:27px;text-align:center;color:#333;">0.77</div>
<div class="t" style="left:465px;top:332px;width:63px;height:27px;line-height:27px;text-align:center;color:#24508a;"><span style="color:#e02020">*</span>平/半</div>
<div class="n" style="left:529px;top:332px;width:44px;height:27px;line-height:27px;text-align:center;color:#333;">1.12</div>
<div class="n" style="left:574px;top:332px;width:62px;height:27px;line-height:27px;text-align:center;color:#333;">3.04</div>
<div class="n" style="left:637px;top:332px;width:62px;height:27px;line-height:27px;text-align:center;color:#3b6194;">3.06</div>
<div class="n" style="left:700px;top:332px;width:62px;height:27px;line-height:27px;text-align:center;color:#333;">2.37</div>
<div class="k" style="left:763px;top:332px;width:39px;height:27px;line-height:27px;text-align:center;color:#b80000;">勝</div>
<div class="k" style="left:803px;top:332px;width:39px;height:27px;line-height:27px;text-align:center;color:#b80000;">贏</div>
<div class="k" style="left:843px;top:332px;width:57px;height:27px;line-height:27px;text-align:center;color:#0a7a0a;">小</div>
<div style="left:50px;top:359px;width:847px;height:27px;background:#ffffff;"></div>
<div style="left:421px;top:359px;width:152px;height:27px;background:#fffaf6;"></div>
<div style="left:574px;top:359px;width:188px;height:27px;background:#f0f8fc;"></div>
<div style="left:0px;top:359px;width:50px;height:27px;background:#009900;"></div>
<div style="left:0px;top:386px;width:897px;height:1px;background:#bbbbbb;"></div>
<div style="left:126px;top:359px;width:1px;height:27px;background:#bbbbbb;"></div>
<div style="left:203px;top:359px;width:1px;height:27px;background:#bbbbbb;"></div>
<div style="left:293px;top:359px;width:1px;height:27px;background:#bbbbbb;"></div>
<div style="left:333px;top:359px;width:1px;height:27px;background:#bbbbbb;"></div>
<div style="left:420px;top:359px;width:1px;height:27px;background:#bbbbbb;"></div>
<div style="left:464px;top:359px;width:1px;height:27px;background:#bbbbbb;"></div>
<div style="left:528px;top:359px;width:1px;height:27px;background:#bbbbbb;"></div>
<div style="left:573px;top:359px;width:1px;height:27px;background:#bbbbbb;"></div>
<div style="left:636px;top:359px;width:1px;height:27px;background:#bbbbbb;"></div>
<div style="left:699px;top:359px;width:1px;height:27px;background:#bbbbbb;"></div>
<div style="left:762px;top:359px;width:1px;height:27px;background:#bbbbbb;"></div>
<div style="left:802px;top:359px;width:1px;height:27px;background:#bbbbbb;"></div>
<div style="left:842px;top:359px;width:1px;height:27px;background:#bbbbbb;"></div>
<div style="left:50px;top:359px;width:1px;height:27px;background:#c0c0c0;"></div>
<div class="t" style="left:0px;top:360px;width:41px;height:27px;line-height:27px;text-align:center;color:#fff;">日职联</div>
<div class="n" style="left:51px;top:360px;width:75px;height:27px;line-height:27px;text-align:center;color:#333;">24-05-03</div>
<div class="t" style="left:127px;top:360px;width:76px;height:27px;line-height:27px;text-align:center;color:#111;">福冈黄蜂</div>
<div class="n" style="left:204px;top:360px;width:89px;height:27px;line-height:27px;text-align:center;color:#333;"><span style="color:#c4202c">1-0</span>(1-0)</div>
<div class="n" style="left:294px;top:360px;width:39px;height:27px;line-height:27px;text-align:center;color:#333;">3-6</div>
<div class="k" style="left:334px;top:360px;width:86px;height:27px;line-height:27px;text-align:center;color:#0a6a0a;">大阪飞脚<span class="rc">1</span></div>
<div class="n" style="left:421px;top:360px;width:43px;height:27px;line-height:27px;text-align:center;color:#333;">1.14</div>
<div class="t" style="left:465px;top:360px;width:63px;height:27px;line-height:27px;text-align:center;color:#24508a;">平/半</div>
<div class="n" style="left:529px;top:360px;width:44px;height:27px;line-height:27px;text-align:center;color:#333;">0.75</div>
<div class="n" style="left:574px;top:360px;width:62px;height:27px;line-height:27px;text-align:center;color:#333;">2.44</div>
<div class="n" style="left:637px;top:360px;width:62px;height:27px;line-height:27px;text-align:center;color:#3b6194;">2.84</div>
<div class="n" style="left:700px;top:360px;width:62px;height:27px;line-height:27px;text-align:center;color:#333;">3.15</div>
<div class="k" style="left:763px;top:360px;width:39px;height:27px;line-height:27px;text-align:center;color:#0a7a0a;">負</div>
<div class="k" style="left:803px;top:360px;width:39px;height:27px;line-height:27px;text-align:center;color:#0a7a0a;">輸</div>
<div class="k" style="left:843px;top:360px;width:57px;height:27px;line-height:27px;text-align:center;color:#0a7a0a;">小</div>
<div style="left:50px;top:387px;width:847px;height:27px;background:#efefef;"></div>
<div style="left:421px;top:387px;width:152px;height:27px;background:#fffaf6;"></div>
<div style="left:574px;top:387px;width:188px;height:27px;background:#f0f8fc;"></div>
<div style="left:0px;top:387px;width:50px;height:27px;background:#009900;"></div>
<div style="left:0px;top:414px;width:897px;height:1px;background:#bbbbbb;"></div>
<div style="left:126px;top:387px;width:1px;height:27px;background:#bbbbbb;"></div>
<div style="left:203px;top:387px;width:1px;height:27px;background:#bbbbbb;"></div>
<div style="left:293px;top:387px;width:1px;height:27px;background:#bbbbbb;"></div>
<div style="left:333px;top:387px;width:1px;height:27px;background:#bbbbbb;"></div>
<div style="left:420px;top:387px;width:1px;height:27px;background:#bbbbbb;"></div>
<div style="left:464px;top:387px;width:1px;height:27px;background:#bbbbbb;"></div>
<div style="left:528px;top:387px;width:1px;height:27px;background:#bbbbbb;"></div>
<div style="left:573px;top:387px;width:1px;height:27px;background:#bbbbbb;"></div>
<div style="left:636px;top:387px;width:1px;height:27px;background:#bbbbbb;"></div>
<div style="left:699px;top:387px;width:1px;height:27px;background:#bbbbbb;"></div>
<div style="left:762px;top:387px;width:1px;height:27px;background:#bbbbbb;"></div>
<div style="left:802px;top:387px;width:1px;height:27px;background:#bbbbbb;"></div>
<div style="left:842px;top:387px;width:1px;height:27px;background:#bbbbbb;"></div>
<div style="left:50px;top:387px;width:1px;height:27px;background:#c0c0c0;"></div>
<div class="t" style="left:0px;top:388px;width:41px;height:27px;line-height:27px;text-align:center;color:#fff;">日职联</div>
<div class="n" style="left:51px;top:388px;width:75px;height:27px;line-height:27px;text-align:center;color:#333;">24-04-28</div>
<div class="k" style="left:127px;top:388px;width:76px;height:27px;line-height:27px;text-align:center;color:#0a6a0a;">大阪飞脚</div>
<div class="n" style="left:204px;top:388px;width:89px;height:27px;line-height:27px;text-align:center;color:#333;"><span style="color:#c4202c">1-2</span>(1-1)</div>
<div class="n" style="left:294px;top:388px;width:39px;height:27px;line-height:27px;text-align:center;color:#333;">6-4</div>
<div class="t" style="left:334px;top:388px;width:86px;height:27px;line-height:27px;text-align:center;color:#111;">鹿岛鹿角</div>
<div class="n" style="left:421px;top:388px;width:43px;height:27px;line-height:27px;text-align:center;color:#333;">0.87</div>
<div class="t" style="left:465px;top:388px;width:63px;height:27px;line-height:27px;text-align:center;color:#24508a;">平手</div>
<div class="n" style="left:529px;top:388px;width:44px;height:27px;line-height:27px;text-align:center;color:#333;">1.01</div>
<div class="n" style="left:574px;top:388px;width:62px;height:27px;line-height:27px;text-align:center;color:#333;">2.66</div>
<div class="n" style="left:637px;top:388px;width:62px;height:27px;line-height:27px;text-align:center;color:#3b6194;">3.10</div>
<div class="n" style="left:700px;top:388px;width:62px;height:27px;line-height:27px;text-align:center;color:#333;">2.63</div>
<div class="k" style="left:763px;top:388px;width:39px;height:27px;line-height:27px;text-align:center;color:#0a7a0a;">負</div>
<div class="k" style="left:803px;top:388px;width:39px;height:27px;line-height:27px;text-align:center;color:#0a7a0a;">輸</div>
<div class="k" style="left:843px;top:388px;width:57px;height:27px;line-height:27px;text-align:center;color:#b80000;">大</div>
<div style="left:50px;top:415px;width:847px;height:27px;background:#ffffff;"></div>
<div style="left:421px;top:415px;width:152px;height:27px;background:#fffaf6;"></div>
<div style="left:574px;top:415px;width:188px;height:27px;background:#f0f8fc;"></div>
<div style="left:0px;top:415px;width:50px;height:27px;background:#4d8b4d;"></div>
<div style="left:0px;top:442px;width:897px;height:1px;background:#bbbbbb;"></div>
<div style="left:126px;top:415px;width:1px;height:27px;background:#bbbbbb;"></div>
<div style="left:203px;top:415px;width:1px;height:27px;background:#bbbbbb;"></div>
<div style="left:293px;top:415px;width:1px;height:27px;background:#bbbbbb;"></div>
<div style="left:333px;top:415px;width:1px;height:27px;background:#bbbbbb;"></div>
<div style="left:420px;top:415px;width:1px;height:27px;background:#bbbbbb;"></div>
<div style="left:464px;top:415px;width:1px;height:27px;background:#bbbbbb;"></div>
<div style="left:528px;top:415px;width:1px;height:27px;background:#bbbbbb;"></div>
<div style="left:573px;top:415px;width:1px;height:27px;background:#bbbbbb;"></div>
<div style="left:636px;top:415px;width:1px;height:27px;background:#bbbbbb;"></div>
<div style="left:699px;top:415px;width:1px;height:27px;background:#bbbbbb;"></div>
<div style="left:762px;top:415px;width:1px;height:27px;background:#bbbbbb;"></div>
<div style="left:802px;top:415px;width:1px;height:27px;background:#bbbbbb;"></div>
<div style="left:842px;top:415px;width:1px;height:27px;background:#bbbbbb;"></div>
<div style="left:50px;top:415px;width:1px;height:27px;background:#c0c0c0;"></div>
<div class="t" style="left:0px;top:416px;width:41px;height:27px;line-height:27px;text-align:center;color:#fff;">日联杯</div>
<div class="n" style="left:51px;top:416px;width:75px;height:27px;line-height:27px;text-align:center;color:#333;">24-04-24</div>
<div class="t" style="left:127px;top:416px;width:76px;height:27px;line-height:27px;text-align:center;color:#111;">琉球</div>
<div class="n" style="left:204px;top:416px;width:89px;height:27px;line-height:27px;text-align:center;color:#333;"><span style="color:#c4202c">2-1</span>(1-0)</div>
<div class="n" style="left:294px;top:416px;width:39px;height:27px;line-height:27px;text-align:center;color:#333;">2-3</div>
<div class="k" style="left:334px;top:416px;width:86px;height:27px;line-height:27px;text-align:center;color:#0a6a0a;">大阪飞脚</div>
<div class="n" style="left:421px;top:416px;width:43px;height:27px;line-height:27px;text-align:center;color:#333;">0.82</div>
<div class="t" style="left:465px;top:416px;width:63px;height:27px;line-height:27px;text-align:center;color:#24508a;"><span style="color:#e02020">*</span>平/半</div>
<div class="n" style="left:529px;top:416px;width:44px;height:27px;line-height:27px;text-align:center;color:#333;">1.00</div>
<div class="n" style="left:574px;top:416px;width:62px;height:27px;line-height:27px;text-align:center;color:#333;">3.38</div>
<div class="n" style="left:637px;top:416px;width:62px;height:27px;line-height:27px;text-align:center;color:#3b6194;">3.56</div>
<div class="n" style="left:700px;top:416px;width:62px;height:27px;line-height:27px;text-align:center;color:#333;">1.96</div>
<div class="k" style="left:763px;top:416px;width:39px;height:27px;line-height:27px;text-align:center;color:#0a7a0a;">負</div>
<div class="k" style="left:803px;top:416px;width:39px;height:27px;line-height:27px;text-align:center;color:#0a7a0a;">輸</div>
<div class="k" style="left:843px;top:416px;width:57px;height:27px;line-height:27px;text-align:center;color:#b80000;">大</div>
<div style="left:50px;top:443px;width:847px;height:27px;background:#efefef;"></div>
<div style="left:421px;top:443px;width:152px;height:27px;background:#fffaf6;"></div>
<div style="left:574px;top:443px;width:188px;height:27px;background:#f0f8fc;"></div>
<div style="left:0px;top:443px;width:50px;height:27px;background:#009900;"></div>
<div style="left:0px;top:470px;width:897px;height:1px;background:#bbbbbb;"></div>
<div style="left:126px;top:443px;width:1px;height:27px;background:#bbbbbb;"></div>
<div style="left:203px;top:443px;width:1px;height:27px;background:#bbbbbb;"></div>
<div style="left:293px;top:443px;width:1px;height:27px;background:#bbbbbb;"></div>
<div style="left:333px;top:443px;width:1px;height:27px;background:#bbbbbb;"></div>
<div style="left:420px;top:443px;width:1px;height:27px;background:#bbbbbb;"></div>
<div style="left:464px;top:443px;width:1px;height:27px;background:#bbbbbb;"></div>
<div style="left:528px;top:443px;width:1px;height:27px;background:#bbbbbb;"></div>
<div style="left:573px;top:443px;width:1px;height:27px;background:#bbbbbb;"></div>
<div style="left:636px;top:443px;width:1px;height:27px;background:#bbbbbb;"></div>
<div style="left:699px;top:443px;width:1px;height:27px;background:#bbbbbb;"></div>
<div style="left:762px;top:443px;width:1px;height:27px;background:#bbbbbb;"></div>
<div style="left:802px;top:443px;width:1px;height:27px;background:#bbbbbb;"></div>
<div style="left:842px;top:443px;width:1px;height:27px;background:#bbbbbb;"></div>
<div style="left:50px;top:443px;width:1px;height:27px;background:#c0c0c0;"></div>
<div class="t" style="left:0px;top:444px;width:41px;height:27px;line-height:27px;text-align:center;color:#fff;">日职联</div>
<div class="n" style="left:51px;top:444px;width:75px;height:27px;line-height:27px;text-align:center;color:#333;">24-04-20</div>
<div class="t" style="left:127px;top:444px;width:76px;height:27px;line-height:27px;text-align:center;color:#111;">浦和红钻</div>
<div class="n" style="left:204px;top:444px;width:89px;height:27px;line-height:27px;text-align:center;color:#333;"><span style="color:#c4202c">0-1</span>(0-0)</div>
<div class="n" style="left:294px;top:444px;width:39px;height:27px;line-height:27px;text-align:center;color:#333;">11-0</div>
<div class="k" style="left:334px;top:444px;width:86px;height:27px;line-height:27px;text-align:center;color:#0a6a0a;">大阪飞脚</div>
<div class="n" style="left:421px;top:444px;width:43px;height:27px;line-height:27px;text-align:center;color:#333;">0.99</div>
<div class="t" style="left:465px;top:444px;width:63px;height:27px;line-height:27px;text-align:center;color:#24508a;">半球</div>
<div class="n" style="left:529px;top:444px;width:44px;height:27px;line-height:27px;text-align:center;color:#333;">0.90</div>
<div class="n" style="left:574px;top:444px;width:62px;height:27px;line-height:27px;text-align:center;color:#333;">1.92</div>
<div class="n" style="left:637px;top:444px;width:62px;height:27px;line-height:27px;text-align:center;color:#3b6194;">3.37</div>
<div class="n" style="left:700px;top:444px;width:62px;height:27px;line-height:27px;text-align:center;color:#333;">3.80</div>
<div class="k" style="left:763px;top:444px;width:39px;height:27px;line-height:27px;text-align:center;color:#b80000;">勝</div>
<div class="k" style="left:803px;top:444px;width:39px;height:27px;line-height:27px;text-align:center;color:#b80000;">贏</div>
<div class="k" style="left:843px;top:444px;width:57px;height:27px;line-height:27px;text-align:center;color:#0a7a0a;">小</div>
<div class="s" style="left:246.5px;top:471px;width:400px;height:27px;line-height:27px;text-align:center;color:#222;">近<i class="r">10</i>场,胜<i>6</i>平<i>1</i>负<i>3</i>, 胜率:<i class="b">60%</i> 赢率:<i class="b">60%</i> 大:<i class="b">40%</i> 单率:<i class="r">80%</i></div>
<div style="left:0px;top:498px;width:897px;height:1px;background:#bbbbbb;"></div>
<div style="left:0px;top:499px;width:897px;height:25px;background:#dce3ed;"></div>
<div style="left:12px;top:501px;height:25px;line-height:25px;font-size:13px;font-weight:bold;color:#3a5a98;-webkit-text-stroke:0.15px #3a5a98;">福岛联队</div>
<div style="left:328px;top:501px;height:25px;line-height:25px;font-size:12px;color:#222;">近</div>
<div class="sel" style="left:343px;top:506px;width:32px;height:14px;"><span style="position:absolute;left:4px;top:0px;line-height:14px;font-size:11px">10</span><svg width="9" height="6" viewBox="0 0 9 6" style="position:absolute;right:3px;top:4px"><path d="M1 1 L4.5 4.6 L8 1" fill="none" stroke="#000" stroke-width="2.3"/></svg></div>
<div style="left:382px;top:501px;height:25px;line-height:25px;font-size:12px;color:#222;">场</div>
<div class="cbu" style="left:397px;top:508px;width:11px;height:11px;"></div>
<div style="left:414px;top:501px;height:25px;line-height:25px;font-size:12px;color:#222;">同客</div>
<div class="cbc" style="left:442px;top:508px;width:13px;height:13px;"><svg width="13" height="13" viewBox="0 0 13 13" style="position:absolute;left:0;top:0"><path d="M2.5 6.9 L5.2 9.5 L10.4 3.3" fill="none" stroke="#fff" stroke-width="2"/></svg></div>
<div style="left:455px;top:501px;height:25px;line-height:25px;font-size:12px;color:#222;">日丙</div>
<div class="cbc" style="left:479px;top:508px;width:13px;height:13px;"><svg width="13" height="13" viewBox="0 0 13 13" style="position:absolute;left:0;top:0"><path d="M2.5 6.9 L5.2 9.5 L10.4 3.3" fill="none" stroke="#fff" stroke-width="2"/></svg></div>
<div style="left:492px;top:501px;height:25px;line-height:25px;font-size:12px;color:#222;">日皇杯</div>
<div class="cbc" style="left:528px;top:508px;width:13px;height:13px;"><svg width="13" height="13" viewBox="0 0 13 13" style="position:absolute;left:0;top:0"><path d="M2.5 6.9 L5.2 9.5 L10.4 3.3" fill="none" stroke="#fff" stroke-width="2"/></svg></div>
<div style="left:541px;top:501px;height:25px;line-height:25px;font-size:12px;color:#222;">日联杯</div>
<div class="cbc" style="left:577px;top:508px;width:13px;height:13px;"><svg width="13" height="13" viewBox="0 0 13 13" style="position:absolute;left:0;top:0"><path d="M2.5 6.9 L5.2 9.5 L10.4 3.3" fill="none" stroke="#fff" stroke-width="2"/></svg></div>
<div style="left:590px;top:501px;height:25px;line-height:25px;font-size:12px;color:#222;">球会友谊</div>
<div style="left:0px;top:524px;width:897px;height:1px;background:#bbbbbb;"></div>
<div style="left:0px;top:525px;width:897px;height:40px;background:#dce3ed;"></div>
<div style="left:0px;top:565px;width:897px;height:1px;background:#bbbbbb;"></div>
<div style="left:50px;top:525px;width:1px;height:40px;background:#bbbbbb;"></div>
<div style="left:126px;top:525px;width:1px;height:40px;background:#bbbbbb;"></div>
<div style="left:203px;top:525px;width:1px;height:40px;background:#bbbbbb;"></div>
<div style="left:293px;top:525px;width:1px;height:40px;background:#bbbbbb;"></div>
<div style="left:333px;top:525px;width:1px;height:40px;background:#bbbbbb;"></div>
<div style="left:420px;top:525px;width:1px;height:40px;background:#bbbbbb;"></div>
<div style="left:573px;top:525px;width:1px;height:40px;background:#bbbbbb;"></div>
<div style="left:762px;top:525px;width:1px;height:40px;background:#bbbbbb;"></div>
<div style="left:420px;top:547px;width:477px;height:1px;background:#bbbbbb;"></div>
<div style="left:464px;top:548px;width:1px;height:17px;background:#bbbbbb;"></div>
<div style="left:528px;top:548px;width:1px;height:17px;background:#bbbbbb;"></div>
<div style="left:636px;top:548px;width:1px;height:17px;background:#bbbbbb;"></div>
<div style="left:699px;top:548px;width:1px;height:17px;background:#bbbbbb;"></div>
<div style="left:802px;top:548px;width:1px;height:17px;background:#bbbbbb;"></div>
<div style="left:842px;top:548px;width:1px;height:17px;background:#bbbbbb;"></div>
<div class="h" style="left:1px;top:527px;width:40px;height:40px;line-height:40px;text-align:center;">类型</div>
<div class="h" style="left:51px;top:527px;width:75px;height:40px;line-height:40px;text-align:center;">日期</div>
<div class="h" style="left:127px;top:527px;width:76px;height:40px;line-height:40px;text-align:center;">主场</div>
<div class="h" style="left:204px;top:527px;width:89px;height:40px;line-height:40px;text-align:center;">比分(半场)</div>
<div class="h" style="left:294px;top:527px;width:39px;height:40px;line-height:40px;text-align:center;">角球</div>
<div class="h" style="left:334px;top:527px;width:86px;height:40px;line-height:40px;text-align:center;">客场</div>
<div class="h" style="left:421px;top:549px;width:43px;height:17px;line-height:17px;text-align:center;">主</div>
<div class="h" style="left:465px;top:549px;width:63px;height:17px;line-height:17px;text-align:center;">盘口</div>
<div class="h" style="left:529px;top:549px;width:44px;height:17px;line-height:17px;text-align:center;">客</div>
<div class="h" style="left:574px;top:549px;width:62px;height:17px;line-height:17px;text-align:center;">主</div>
<div class="h" style="left:637px;top:549px;width:62px;height:17px;line-height:17px;text-align:center;">和</div>
<div class="h" style="left:700px;top:549px;width:62px;height:17px;line-height:17px;text-align:center;">客</div>
<div class="h" style="left:763px;top:549px;width:39px;height:17px;line-height:17px;text-align:center;">胜负</div>
<div class="h" style="left:803px;top:549px;width:39px;height:17px;line-height:17px;text-align:center;">让球</div>
<div class="h" style="left:843px;top:549px;width:57px;height:17px;line-height:17px;text-align:center;">进球数</div>
<div class="sel" style="left:447px;top:526px;width:56px;height:18px;"><span style="position:absolute;left:4px;top:0px;line-height:18px;font-size:13px">Crow*</span><svg width="9" height="6" viewBox="0 0 9 6" style="position:absolute;right:4px;top:6px"><path d="M1 1 L4.5 4.6 L8 1" fill="none" stroke="#000" stroke-width="2.3"/></svg></div>
<div class="sel" style="left:512px;top:526px;width:32px;height:18px;"><span style="position:absolute;left:4px;top:0px;line-height:18px;font-size:12px">终</span><svg width="9" height="6" viewBox="0 0 9 6" style="position:absolute;right:4px;top:6px"><path d="M1 1 L4.5 4.6 L8 1" fill="none" stroke="#000" stroke-width="2.3"/></svg></div>
<div class="sel" style="left:606px;top:526px;width:80px;height:18px;"><span style="position:absolute;left:4px;top:0px;line-height:18px;font-size:12px">胜平负均值</span><svg width="9" height="6" viewBox="0 0 9 6" style="position:absolute;right:4px;top:6px"><path d="M1 1 L4.5 4.6 L8 1" fill="none" stroke="#000" stroke-width="2.3"/></svg></div>
<div class="sel" style="left:695px;top:526px;width:32px;height:18px;"><span style="position:absolute;left:4px;top:0px;line-height:18px;font-size:12px">终</span><svg width="9" height="6" viewBox="0 0 9 6" style="position:absolute;right:4px;top:6px"><path d="M1 1 L4.5 4.6 L8 1" fill="none" stroke="#000" stroke-width="2.3"/></svg></div>
<div class="sel" style="left:809px;top:526px;width:44px;height:18px;"><span style="position:absolute;left:4px;top:0px;line-height:18px;font-size:12px">全场</span><svg width="9" height="6" viewBox="0 0 9 6" style="position:absolute;right:3px;top:6px"><path d="M1 1 L4.5 4.6 L8 1" fill="none" stroke="#000" stroke-width="2.3"/></svg></div>
</body></html>
